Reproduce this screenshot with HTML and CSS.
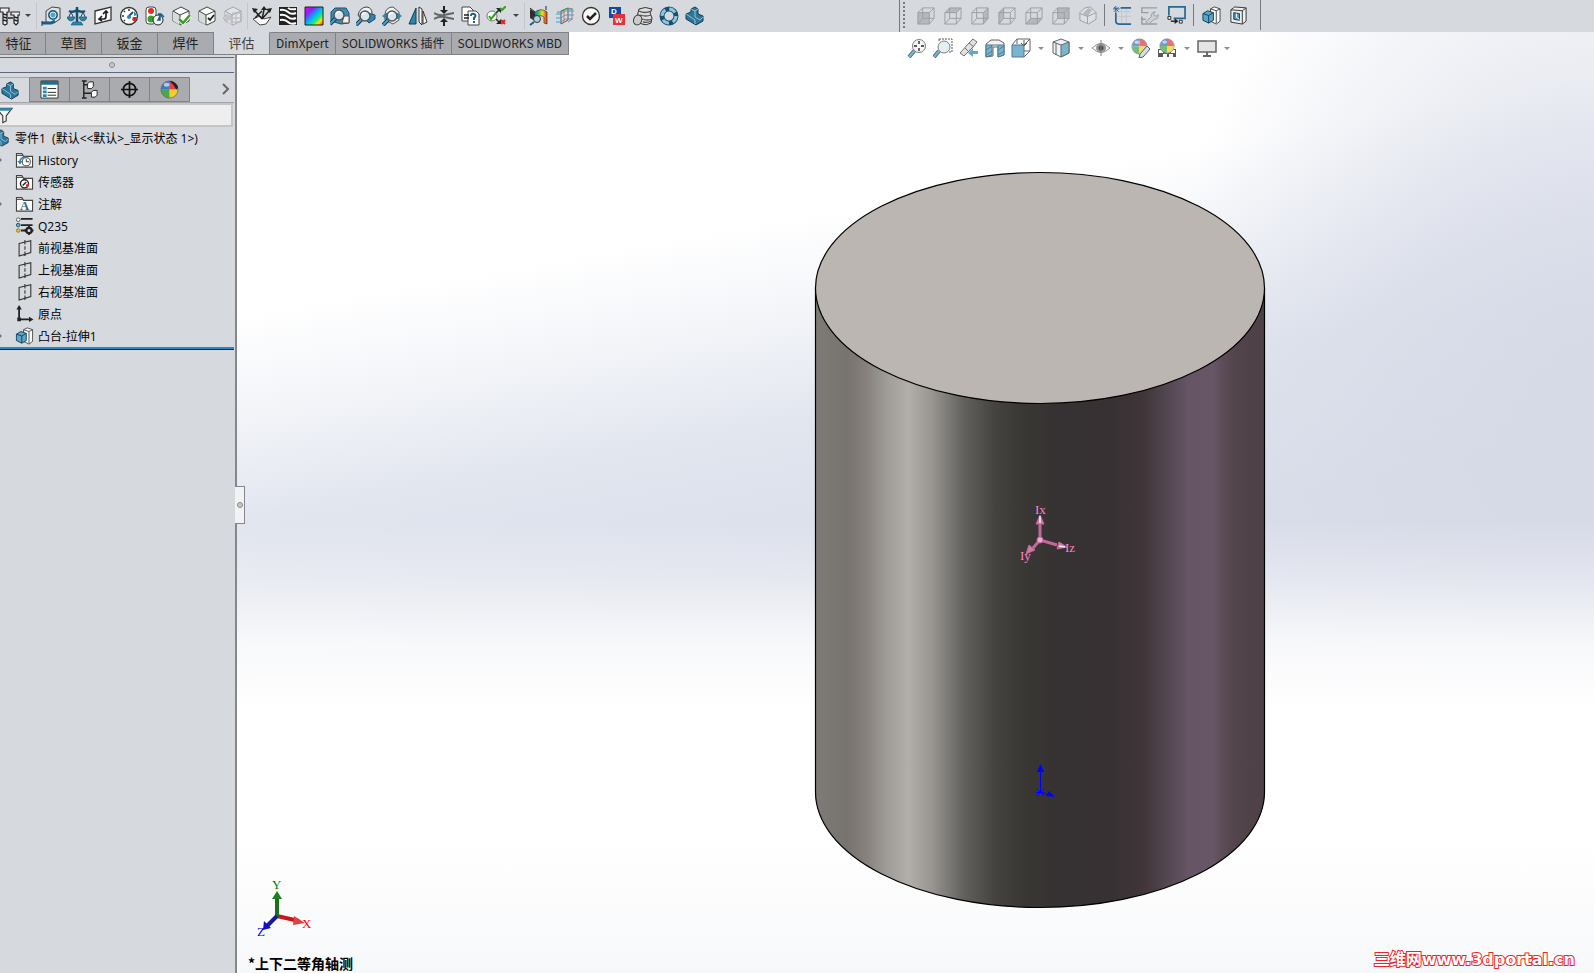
FILE: index.html
```html
<!DOCTYPE html>
<html lang="zh-CN">
<head>
  <meta charset="UTF-8">
  <meta name="viewport" content="width=device-width, initial-scale=1.0">
  <title>零件1</title>
  <link rel="stylesheet" href="styles.css">
</head>
<body>

<!-- Shared icon shapes -->
<svg class="defs" width="0" height="0" aria-hidden="true">
  <defs>
    <linearGradient id="side">
      <stop offset="0" stop-color="#7e7b77"/>
      <stop offset=".07" stop-color="#77736f"/>
      <stop offset=".11" stop-color="#867f7b"/>
      <stop offset=".16" stop-color="#9f9d98"/>
      <stop offset=".207" stop-color="#b2aeaa"/>
      <stop offset=".26" stop-color="#989490"/>
      <stop offset=".33" stop-color="#62615e"/>
      <stop offset=".4" stop-color="#444340"/>
      <stop offset=".46" stop-color="#393834"/>
      <stop offset=".54" stop-color="#363132"/>
      <stop offset=".66" stop-color="#383134"/>
      <stop offset=".73" stop-color="#403539"/>
      <stop offset=".78" stop-color="#52464f"/>
      <stop offset=".83" stop-color="#665564"/>
      <stop offset=".885" stop-color="#675666"/>
      <stop offset=".92" stop-color="#564751"/>
      <stop offset=".95" stop-color="#50434a"/>
      <stop offset="1" stop-color="#4d4147"/>
    </linearGradient>
    <linearGradient id="hue" x2="1" y2="1">
      <stop offset="0" stop-color="#ff00e0"/>
      <stop offset=".25" stop-color="#8a20ff"/>
      <stop offset=".5" stop-color="#00b4ff"/>
      <stop offset=".68" stop-color="#20e880"/>
      <stop offset=".82" stop-color="#f4e800"/>
      <stop offset="1" stop-color="#ff3000"/>
    </linearGradient>
    <linearGradient id="heat">
      <stop offset="0" stop-color="#2060e0"/>
      <stop offset=".35" stop-color="#30c060"/>
      <stop offset=".65" stop-color="#f0e020"/>
      <stop offset="1" stop-color="#e83020"/>
    </linearGradient>
    <symbol id="part" viewBox="0 0 20 20">
      <path d="M1 8l5-2V3l4-2 3 2v5l5 2v5l-7 4L1 13z" fill="#2e7597" stroke="#123c55"/>
      <path d="M6 3l4 2v6l5 3 3-3M10 5l3-2M1 8l9 6v4" fill="none" stroke="#8fc3da"/>
    </symbol>
    <symbol id="lens" viewBox="0 0 20 20">
      <path d="M8 12l-6 6" stroke="#123c55" stroke-width="4"/>
      <path d="M8 12l-6 6" stroke="#4d9dc2" stroke-width="2"/>
      <circle cx="11" cy="9" r="5" fill="#d5e6ee" stroke="#555" stroke-width="1.5"/>
      <path d="M8 8q1-3 4-2" fill="none" stroke="#fff" stroke-width="1.5"/>
    </symbol>
    <symbol id="box" viewBox="0 0 20 20">
      <path d="M2 5l8-4 8 4v10l-8 4-8-4z" fill="#fafafa" stroke="#444"/>
      <path d="M2 5l7 4v10l-7-4z" fill="#d9dadc"/>
      <path d="M2 5l7 4v10M9 9l9-4" fill="none" stroke="#444"/>
    </symbol>
    <symbol id="cube" viewBox="0 0 20 20">
      <path d="M2 7h12v12H2zM7 2h12v11H7zM2 7l5-5M14 7l5-5M14 19l5-6M2 19l5-6" fill="none" stroke="#888b90"/>
    </symbol>
    <symbol id="ball" viewBox="0 0 20 20">
      <path d="M10 10V1a9 9 0 0 0-9 9z" fill="#3f79c4"/>
      <path d="M10 10V1a9 9 0 0 1 9 9z" fill="#e34146"/>
      <path d="M10 10H1a9 9 0 0 0 9 9z" fill="#48a84c"/>
      <path d="M10 10h9a9 9 0 0 1-9 9z" fill="#f3cf2d"/>
      <circle cx="10" cy="10" r="9" fill="none" stroke="#666" stroke-width=".8"/>
      <ellipse cx="7" cy="5" rx="3" ry="2" fill="#fff" opacity=".6"/>
    </symbol>
    <symbol id="extrude" viewBox="0 0 20 20">
      <path d="M9 3l4-2 6 2v13l-4 3-6-3z" fill="#fff" stroke="#444"/>
      <path d="M15 5v13M15 5l4-2M9 3l6 2" fill="none" stroke="#444"/>
      <path d="M1 8l5-3 6 2v8l-5 3-6-3z" fill="#5aa7c9" stroke="#123c55"/>
      <path d="M1 8l6 2 5-3M7 10v8" fill="none" stroke="#123c55"/>
    </symbol>
    <symbol id="folder" viewBox="0 0 20 20">
      <path d="M1 18V3h6l2 3h10v12z" fill="#fafafa" stroke="#444" stroke-width="1.3"/>
      <path d="M1 5h7" stroke="#444"/>
    </symbol>
    <symbol id="plane" viewBox="0 0 20 20">
      <path d="M4 5l13-3v13L4 19zM10.500 1v5M10.500 8v4M10.500 14v5" fill="none" stroke="#333" stroke-width="1.2"/>
    </symbol>
  </defs>
</svg>

<header class="topbar">
  <div class="toolbar toolbar-main">
    <button class="tool bolts" aria-label="智能扣件"><svg viewBox="0 0 20 20"><path d="M0 2h9v4H7v12l-2 1-2-1V6H0zM11 6h9v3h-2v8l-2 2-2-2V9h-3z" fill="#eee" stroke="#222" stroke-width="1.200"/><path d="M3 8l4 1M3 11l4 1M3 14l4 1M14 11l4 1M14 14l4 1M8 12h5" stroke="#222" stroke-width="1.300"/></svg></button>
    <button class="caret" aria-label="更多扣件"></button>
    <span class="sep"></span>
    <button class="tool" aria-label="测量"><svg viewBox="0 0 20 20"><path d="M5 5l6-4 8 1v11l-6 4-8-1z" fill="#e0e2e4" stroke="#444"/><circle cx="12" cy="9" r="4" fill="#52a5cc" stroke="#1c5f85" stroke-width="2"/><circle cx="12" cy="9" r="3" fill="none" stroke="#d5eaf3"/><path d="M1 17h9l4-2" fill="none" stroke="#1c5f85" stroke-width="3"/><path d="M1 15v5" stroke="#123c55"/></svg></button>
    <button class="tool" aria-label="质量属性"><svg viewBox="0 0 20 20"><path d="M10 1v16M2 5q4 2 8-1 4 3 8 1" fill="none" stroke="#174f70" stroke-width="2.500"/><path d="M4 6l-3 7M4 6l3 7M16 6l-3 7M16 6l3 7" stroke="#174f70"/><path d="M0 11h8q-1 4-4 4t-4-4zM12 11h8q-1 4-4 4t-4-4zM6 16h8l2 3H4z" fill="#2e86ad" stroke="#174f70" stroke-width=".6"/></svg></button>
    <button class="tool" aria-label="截面属性"><svg viewBox="0 0 20 20"><path d="M2 5l16-4v13L2 18z" fill="#fff" stroke="#333" stroke-width="1.300"/><path d="M6 13h5q2 0 2-3V6M9 10l-3 3 3 2M10 8l3-3 2 2" fill="none" stroke="#222" stroke-width="1.700"/></svg></button>
    <button class="tool" aria-label="传感器"><svg viewBox="0 0 20 20"><circle cx="10" cy="10" r="8.500" fill="#fff" stroke="#333" stroke-width="1.300"/><path d="M10 3v2M5 5l1 1M3 10h2M5 15l1-1" stroke="#333" stroke-width="1.500"/><path d="M15 5l3 4-3 1z" fill="#2e86ad"/><path d="M14 11h4l-2 5-3-2z" fill="#d22"/><path d="M14 6l-4 4" stroke="#174f70" stroke-width="2"/><circle cx="10" cy="11" r="2" fill="#2e86ad"/></svg></button>
    <button class="tool" aria-label="性能评估"><svg viewBox="0 0 20 20"><rect x="1" y="1" width="10" height="17" rx="3" fill="#fff" stroke="#444"/><circle cx="6" cy="5" r="3" fill="#e03020"/><circle cx="6" cy="13" r="3.500" fill="#35a030"/><circle cx="13" cy="14" r="5" fill="#f4f4f4" stroke="#222"/><path d="M13 14l2-4v4zM13 8h3l3 3" fill="#1c5f85" stroke="#1c5f85" stroke-width="1.500"/></svg></button>
    <button class="tool" aria-label="检查"><svg viewBox="0 0 20 20"><use href="#box"/><path d="M8 13l4 4 7-8" fill="none" stroke="#fff" stroke-width="4"/><path d="M8 13l4 4 7-8" fill="none" stroke="#35a020" stroke-width="2.500"/></svg></button>
    <button class="tool" aria-label="输入诊断"><svg viewBox="0 0 20 20"><use href="#box"/><path d="M11 12l2 2 4-5" fill="none" stroke="#222" stroke-width="1.800"/></svg></button>
    <button class="tool off faint" aria-label="几何体分析" disabled><svg viewBox="0 0 20 20"><use href="#box"/><path d="M9 7h9v9H9M13 7v9M9 12h9" fill="none" stroke="#777"/><path d="M8 10v3H4v3l-4-4 4-4v2z" fill="#aaa" stroke="#888"/></svg></button>
    <span class="sep"></span>
    <button class="tool" aria-label="误差分析"><svg viewBox="0 0 20 20"><path d="M1 13l7-3 4 3 7-2-5 7-6 1z" fill="#fff" stroke="#444"/><path d="M10 13L3 5M10 13l2-9M10 13l7-8M3 12l7-7" stroke="#222" stroke-width="1.500"/><path d="M0 2l6 1-4 4zM9 4h6l-3-4zM20 2l-6 1 4 4z" fill="#222"/></svg></button>
    <button class="tool" aria-label="斑马条纹"><svg viewBox="0 0 20 20"><path d="M1 1h18v18H1z" fill="#222"/><path d="M2 4q5-1 8 2t8 1M2 9q5-1 8 2t8 1M2 14q5-1 8 2t8 1M10 2q3 2 8 1" fill="none" stroke="#fff" stroke-width="2"/></svg></button>
    <button class="tool" aria-label="曲率"><svg viewBox="0 0 20 20"><path d="M1 1h18v18H1z" fill="url(#hue)" stroke="#222"/></svg></button>
    <button class="tool" aria-label="拔模分析"><svg viewBox="0 0 20 20"><path d="M1 6l4-4h11l3 5v10l-8 1L1 15z" fill="#3e8fb4" stroke="#174f70"/><path d="M14 10h5v7h-7z" fill="#eee" stroke="#555"/><use href="#lens" x="-2"/></svg></button>
    <button class="tool" aria-label="底切分析"><svg viewBox="0 0 20 20"><path d="M2 9q2-8 9-8 5 1 5 6v6H5z" fill="#f2f2f2" stroke="#444"/><path d="M12 7l7 2v4l-6 4-4-4z" fill="#2e86ad" stroke="#174f70"/><use href="#lens" x="-2" y="1"/></svg></button>
    <button class="tool" aria-label="分型线分析"><svg viewBox="0 0 20 20"><path d="M3 8q1-7 8-7l6 5v8l-6 4-8-4z" fill="#f2f2f2" stroke="#555"/><path d="M0 10l4-3h12l4 3-4 3H4z" fill="#2e86ad"/><use href="#lens" x="-1" y="1"/></svg></button>
    <button class="tool" aria-label="对称检查"><svg viewBox="0 0 20 20"><path d="M8 2L1 18h7z" fill="#2e86ad" stroke="#123c55"/><path d="M11 1l3 2v16l-3-3zM15 5l4 11-4 2z" fill="#fff" stroke="#333"/></svg></button>
    <button class="tool" aria-label="厚度分析"><svg viewBox="0 0 20 20"><path d="M0 7q5 3 10 2t10-2M0 13q5-3 10-2t10 2" fill="none" stroke="#666" stroke-width="2"/><path d="M10 0v5M10 15v5" stroke="#222" stroke-width="2"/><path d="M6 4h8l-4 4zM6 16h8l-4-4z" fill="#222"/></svg></button>
    <button class="tool" aria-label="比较文档"><svg viewBox="0 0 20 20"><path d="M2 1h8l3 3v11H2z" fill="#fff" stroke="#444"/><path d="M8 5h8l3 3v11H8z" fill="#fff" stroke="#444"/><path d="M4 9h5M4 12h5" stroke="#222" stroke-width="1.500"/><path d="M11 10q0-3 3-2 3 1 0 4v2M14 15v2" fill="none" stroke="#1c5f85" stroke-width="2"/></svg></button>
    <button class="tool" aria-label="检查激活的文档"><svg viewBox="0 0 20 20"><path d="M9 8l4-4M9 12l4 4" stroke="#222" stroke-width="1.500"/><path d="M10 2h5v5zM10 18h5v-5z" fill="#222"/><circle cx="6" cy="10" r="5" fill="#fff" stroke="#777"/><path d="M3 10l2 3 5-6M14 2l2 2 4-4" fill="none" stroke="#35a020" stroke-width="2"/><path d="M15 14l4 4M19 14l-4 4" stroke="#d22" stroke-width="2"/></svg></button>
    <button class="caret" aria-label="更多检查"></button>
    <span class="sep"></span>
    <button class="tool" aria-label="SimulationXpress"><svg viewBox="0 0 20 20"><path d="M1 3l5 3v9l-5-3z" fill="#333"/><path d="M5 7q6-6 13-1v12l-3-1V11q-4-3-7 1z" fill="url(#heat)" stroke="#333" stroke-width=".7"/><path d="M1 2l5 4M1 6l5 4M17 0v4" stroke="#222"/><circle cx="8" cy="13" r="3.500" fill="#a8d0e2" stroke="#333"/><path d="M5 16l-4 3" stroke="#1c5f85" stroke-width="2"/></svg></button>
    <button class="tool" aria-label="FloXpress"><svg viewBox="0 0 20 20"><path d="M6 5l7-3v12l-7 4z" fill="#eed8d6" stroke="#555"/><path d="M13 2l4 1v10l-4 3M9 4v12" fill="none" stroke="#d66"/><path d="M1 8h5l4-3h9M1 12h5l4-3h9M1 16h5l4-3h8" fill="none" stroke="#38a0d8"/><path d="M2 6h4l5-3h7" fill="none" stroke="#3a7"/></svg></button>
    <button class="tool" aria-label="DFMXpress"><svg viewBox="0 0 20 20"><circle cx="10" cy="10" r="8.500" fill="#f7f7f7" stroke="#333" stroke-width="1.300"/><path d="M6 10l3 3 6-6" fill="none" stroke="#222" stroke-width="2.500"/></svg></button>
    <button class="tool" aria-label="DriveWorksXpress"><svg viewBox="0 0 20 20"><path d="M2 1h12v11H2z" fill="#0b4da2"/><path d="M6 8h12v11H6z" fill="#e8303a"/><text x="4" y="8" class="tiny">D</text><text x="8" y="17" class="tiny">W</text></svg></button>
    <button class="tool" aria-label="Costing"><svg viewBox="0 0 20 20"><path d="M6 3q6-3 13 0l-2 4 2 5-1 5q-5 3-9 1l-6-3z" fill="#ddd" stroke="#333"/><path d="M6 5q6 3 12 0M7 9q6 2 11 0M9 13q6 2 10 0M10 16q5 1 8-1" fill="none" stroke="#555" stroke-width="1.300"/><ellipse cx="5" cy="14" rx="4" ry="5" fill="#ccc" stroke="#333" transform="rotate(20 5 13)"/></svg></button>
    <button class="tool" aria-label="Sustainability"><svg viewBox="0 0 20 20"><circle cx="10" cy="10" r="7" fill="none" stroke="#174f70" stroke-width="5"/><circle cx="10" cy="10" r="7" fill="none" stroke="#8fc6de" stroke-width="3" stroke-dasharray="7 4"/></svg></button>
    <button class="tool" aria-label="零件"><svg viewBox="0 0 20 20"><use href="#part"/></svg></button>
  </div>

  <div class="toolbar toolbar-views">
    <span class="grip"></span>
    <button class="tool wide off" aria-label="前视" disabled><svg viewBox="0 0 20 20"><path d="M2 7h12v12H2z" fill="#aaadb1"/><use href="#cube"/></svg></button>
    <button class="tool wide off" aria-label="后视" disabled><svg viewBox="0 0 20 20"><path d="M2 7l5-5h12l-5 5z" fill="#aaadb1"/><use href="#cube"/></svg></button>
    <button class="tool wide off" aria-label="左视" disabled><svg viewBox="0 0 20 20"><path d="M14 7l5-5v11l-5 6z" fill="#aaadb1"/><use href="#cube"/></svg></button>
    <button class="tool wide off" aria-label="右视" disabled><svg viewBox="0 0 20 20"><path d="M2 7l5-5v11l-5 6z" fill="#aaadb1"/><use href="#cube"/></svg></button>
    <button class="tool wide off" aria-label="上视" disabled><svg viewBox="0 0 20 20"><path d="M2 19l5-6h12l-5 6z" fill="#aaadb1"/><use href="#cube"/></svg></button>
    <button class="tool wide off" aria-label="下视" disabled><svg viewBox="0 0 20 20"><path d="M7 2h12v11H7z" fill="#aaadb1"/><use href="#cube"/></svg></button>
    <button class="tool wide off" aria-label="正视于" disabled><svg viewBox="0 0 20 20"><path d="M2 7l5-5 6-1 6 6v7l-8 5-9-4z" fill="#e2e3e5" stroke="#888b90"/><path d="M5 8l6-6 4 2-5 7z" fill="#aaadb1"/><path d="M2 8l8 3v8M10 11l9-4" fill="none" stroke="#888b90"/></svg></button>
    <span class="sep dark"></span>
    <button class="tool wide" aria-label="草图"><svg viewBox="0 0 20 20"><path d="M5 6h14M5 11h14M9 1v18M14 1v18" stroke="#c3c6cc"/><path d="M8 2h11M3 7v9q0 3 4 3h12" fill="none" stroke="#236b92" stroke-width="1.800"/><path d="M3 0v7M0 3h7M1 1l5 5M6 1L1 6" stroke="#236b92"/></svg></button>
    <button class="tool wide off" aria-label="编辑草图" disabled><svg viewBox="0 0 20 20"><path d="M1 2h17M2 2v5h7M2 11v8h16M1 14h5" fill="none" stroke="#888" stroke-width="1.500"/><path d="M6 17l6-6q-1-4 4-5l-2 3 3 2 2-2q1 5-4 5l-6 5z" fill="#ccc" stroke="#888"/></svg></button>
    <button class="tool wide" aria-label="移动视图"><svg viewBox="0 0 20 20"><path d="M2 10V1h17v12H7" fill="none" stroke="#236b92" stroke-width="1.800"/><path d="M1 11h3v3H1zM13 15h3v3h-3z" fill="#fff" stroke="#222"/><path d="M4 16h5" stroke="#222" stroke-width="1.500"/><path d="M8 13l4 3-4 3z" fill="#222"/></svg></button>
    <span class="sep dark"></span>
    <button class="tool wide" aria-label="拉伸凸台"><svg viewBox="0 0 20 20"><use href="#extrude"/></svg></button>
    <button class="tool wide" aria-label="拉伸切除"><svg viewBox="0 0 20 20"><path d="M2 4l4-3 12 1v14l-4 3-12-2z" fill="#eee" stroke="#333"/><path d="M2 4l12 1v14M14 5l4-3" fill="none" stroke="#333"/><path d="M5 7l6 1v7l-6-1z" fill="#4d9dc2" stroke="#123c55"/><path d="M8 8v4l3 2" fill="none" stroke="#fff"/></svg></button>
  </div>
</header>

<main class="workspace">
  <div class="tab-row">
    <nav class="tabs">
      <button class="tab tab-first">特征</button>
      <button class="tab">草图</button>
      <button class="tab">钣金</button>
      <button class="tab">焊件</button>
      <button class="tab active">评估</button>
      <button class="tab latin">DimXpert</button>
      <button class="tab latin">SOLIDWORKS 插件</button>
      <button class="tab latin">SOLIDWORKS MBD</button>
    </nav>

    <div class="hud">
      <button class="tool" aria-label="整屏显示全图"><svg viewBox="0 0 20 20"><path d="M8 12l-6 7" stroke="#123c55" stroke-width="4"/><path d="M8 12l-6 7" stroke="#4d9dc2" stroke-width="2"/><circle cx="12" cy="8" r="6.500" fill="#f4f4f4" stroke="#555"/><path d="M12 3v3M12 10v3M7 8h3M14 8h3" stroke="#222" stroke-width="1.800"/></svg></button>
      <button class="tool" aria-label="局部放大"><svg viewBox="0 0 20 20"><path d="M6 1h13v13h-3M6 1v3" fill="none" stroke="#222" stroke-dasharray="2 1"/><path d="M6 13l-5 6" stroke="#123c55" stroke-width="4"/><path d="M6 13l-5 6" stroke="#4d9dc2" stroke-width="2"/><circle cx="11" cy="9" r="6" fill="#dde9ee" stroke="#555"/></svg></button>
      <button class="tool" aria-label="上一视图"><svg viewBox="0 0 20 20"><path d="M1 15l9-10 4-4 4 3-4 5-9 9z" fill="#d8d8d8" stroke="#444"/><path d="M10 5l5 4M6 10l4 4" stroke="#444"/><path d="M19 13v3h-5v3l-5-4 5-5v3z" fill="#3689b1"/></svg></button>
      <button class="tool" aria-label="剖面视图"><svg viewBox="0 0 20 20"><path d="M1 6l5-4h8l5 3v12l-6 2V9H8v9l-7 1z" fill="#eee" stroke="#333"/><path d="M1 7h6v10l-6 2zM13 7h6v10l-6 2z" fill="#4d9dc2" stroke="#174f70"/><path d="M1 12l6-4M1 17l6-4M13 12l6-4M13 17l6-4M7 7h6" stroke="#174f70"/></svg></button>
      <button class="tool" aria-label="视图定向"><svg viewBox="0 0 20 20"><path d="M1 7l5-6h13v12l-6 6M6 1v5M13 7l6-6M13 13h6" fill="none" stroke="#333"/><path d="M1 7h12v12H1z" fill="#4d9dc2" stroke="#174f70"/><path d="M13 2v6M10 5l3 3 3-3" fill="none" stroke="#222"/></svg></button>
      <button class="caret" aria-label="视图定向选项"></button>
      <button class="tool" aria-label="显示样式"><svg viewBox="0 0 20 20"><path d="M2 4l8-3 8 3v11l-8 4-8-4z" fill="#e5eff4" stroke="#333"/><path d="M10 7l8-3v11l-8 4z" fill="#4d9dc2" stroke="#333"/><path d="M2 4l8 3M5 5v12" stroke="#333"/></svg></button>
      <button class="caret" aria-label="显示样式选项"></button>
      <button class="tool" aria-label="隐藏显示项目"><svg viewBox="0 0 20 20"><path d="M1 10q9-9 18 0-9 9-18 0z" fill="#eee" stroke="#777"/><circle cx="10" cy="10" r="5" fill="#777"/><circle cx="10" cy="10" r="2.500" fill="#111"/><path d="M10 2v16" stroke="#555"/></svg></button>
      <button class="caret" aria-label="隐藏显示选项"></button>
      <button class="tool" aria-label="编辑外观"><svg viewBox="0 0 20 20"><use href="#ball" width="17" height="17"/><path d="M9 16l7-8 3 3-7 8-4 1z" fill="#b8dbe9" stroke="#222"/></svg></button>
      <button class="tool" aria-label="应用布景"><svg viewBox="0 0 20 20"><path d="M1 11h18v8H1z" fill="#222"/><path d="M2 12h4v3H2zM14 12h4v3h-4zM6 16h4v3H6zM12 16h4v3h-4z" fill="#fff"/><use href="#ball" x="2" width="16" height="16"/></svg></button>
      <button class="caret" aria-label="布景选项"></button>
      <button class="tool" aria-label="视图设定"><svg viewBox="0 0 20 20"><path d="M1 3h18v11H1z" fill="#ddd" stroke="#333" stroke-width="1.500"/><path d="M10 14v4M6 18h8" stroke="#333" stroke-width="2"/></svg></button>
      <button class="caret" aria-label="视图设定选项"></button>
    </div>
  </div>

  <aside class="panel">
    <div class="panel-handle"><span class="dot"></span></div>
    <div class="panel-tabs">
      <button class="ptab active" aria-label="设计树"><svg viewBox="0 0 20 20"><use href="#part"/></svg></button>
      <button class="ptab" aria-label="属性"><svg viewBox="0 0 20 20"><path d="M1 1h18v18H1z" fill="#fff" stroke="#333"/><path d="M1 1h18v4H1z" fill="#1f6d95"/><path d="M3 7h4v3H3zM3 11h4v3H3zM3 15h4v3H3z" fill="#2e86ad"/><path d="M8 9h9M8 13h9M8 16h9" stroke="#222"/></svg></button>
      <button class="ptab" aria-label="配置"><svg viewBox="0 0 20 20"><path d="M4 1v18M4 5h4M4 14h8M2 1h5M2 19h5" fill="none" stroke="#222" stroke-width="1.500"/><path d="M8 4l2-2h4v5l-2 2H8zM12 13l2-2h4v5l-2 2h-4z" fill="#fff" stroke="#222"/></svg></button>
      <button class="ptab" aria-label="尺寸"><svg viewBox="0 0 20 20"><circle cx="10" cy="10" r="6.500" fill="none" stroke="#111" stroke-width="1.800"/><path d="M10 1v18M1 10h18" stroke="#111" stroke-width="1.800"/></svg></button>
      <button class="ptab" aria-label="外观"><svg viewBox="0 0 20 20"><use href="#ball"/><path d="M10 1q4 3 7 9 2-1 2-3-3-6-9-6z" fill="#222"/></svg></button>
      <button class="more" aria-label="展开"><svg viewBox="0 0 10 12"><path d="M2 1l5 5-5 5" fill="none" stroke="#666" stroke-width="2"/></svg></button>
    </div>
    <div class="filter">
      <svg viewBox="0 0 20 20"><path d="M0 2h19l-7 9v6l-4 2v-8z" fill="#f7f7f7" stroke="#333" stroke-width="1.300"/><path d="M1 2h18l-2 3H3z" fill="#2e86ad"/></svg>
      <input type="text" aria-label="过滤器">
    </div>
    <ul class="tree">
      <li class="root"><svg viewBox="0 0 20 20"><use href="#part"/></svg><span>零件1&nbsp; (默认&lt;&lt;默认&gt;_显示状态 1&gt;)</span></li>
      <li class="has-children"><svg viewBox="0 0 20 20"><use href="#folder"/><circle cx="12" cy="12" r="4.500" fill="#fff" stroke="#333"/><path d="M12 9v3h3" fill="none" stroke="#222"/><path d="M12 7q-7-1-7 6" fill="none" stroke="#2e86ad" stroke-width="1.800"/><path d="M2 11h6l-3 4z" fill="#2e86ad"/></svg><span>History</span></li>
      <li><svg viewBox="0 0 20 20"><use href="#folder"/><circle cx="10" cy="12" r="4.500" fill="#fff" stroke="#222" stroke-width="1.500"/><path d="M8 14l4-4" stroke="#222" stroke-width="1.500"/><path d="M12 13l3 0-2 3z" fill="#d22" stroke="#d22"/></svg><span>传感器</span></li>
      <li class="has-children"><svg viewBox="0 0 20 20"><use href="#folder"/><text x="5" y="17" class="letter">A</text></svg><span>注解</span></li>
      <li><svg viewBox="0 0 20 20"><path d="M6 2h13M6 9h13M6 15h8" stroke="#222" stroke-width="2"/><circle cx="3" cy="3" r="2" fill="#fff" stroke="#555"/><circle cx="3" cy="9" r="2" fill="#5bb7e0" stroke="#246"/><circle cx="3" cy="15" r="2" fill="#f2c010" stroke="#874"/><circle cx="15" cy="15" r="3" fill="#d6d9de" stroke="#222" stroke-width="2.500"/><path d="M15 10v3M15 17v3M10 15h3M17 15h3" stroke="#222" stroke-width="2"/></svg><span>Q235</span></li>
      <li><svg viewBox="0 0 20 20"><use href="#plane"/></svg><span>前视基准面</span></li>
      <li><svg viewBox="0 0 20 20"><use href="#plane"/></svg><span>上视基准面</span></li>
      <li><svg viewBox="0 0 20 20"><use href="#plane"/></svg><span>右视基准面</span></li>
      <li><svg viewBox="0 0 20 20"><path d="M4 3v13h13" fill="none" stroke="#222" stroke-width="2"/><path d="M1 5l3-5 3 5zM15 13l5 3-5 3zM2 14h4v4H2z" fill="#222"/></svg><span>原点</span></li>
      <li class="has-children"><svg viewBox="0 0 20 20"><use href="#extrude"/></svg><span>凸台-拉伸1</span></li>
    </ul>
    <div class="rollback"></div>
    <button class="splitter" aria-label="折叠面板"><span class="dot"></span></button>
  </aside>

  <section class="viewport">
    <svg class="scene" viewBox="237 32 1357 941">
      <!-- Cylinder -->
      <path d="M815.500 288v504a224.500 115.500 0 0 0 449 0V288z" fill="url(#side)" stroke="#000" stroke-width="1.200"/>
      <ellipse cx="1040" cy="288" rx="224.500" ry="115.500" fill="#bcb6b2" stroke="#000" stroke-width="1.200"/>

      <!-- Principal axes of inertia -->
      <g stroke="#c06a98" stroke-width="3" fill="#d078a4">
        <path d="M1040 540v-18M1040 540l17 5M1040 540l-7 8"/>
        <path d="M1040 515l4 9h-8zM1067 547l-10 2 2-7zM1026 554l3-9 6 5z" stroke-width="1"/>
        <path d="M1040 516v7M1059 546l6 1" stroke="#ffe4f2" stroke-width="1.500"/>
        <circle cx="1040" cy="540" r="3" stroke-width="1" fill="#f0a8cc"/>
      </g>
      <g class="axis pink">
        <text x="1035" y="514">Ix</text>
        <text x="1065" y="552">Iz</text>
        <text x="1020" y="560">Iy</text>
      </g>

      <!-- Origin -->
      <path d="M1040.500 792v-20M1040 792l10 3M1037 789l7 7M1044 789l-7 7M1036 792.500h8" stroke="#00f" fill="none"/>
      <path d="M1037 772l3.500-8 3.500 8zM1046 796l3-5 6 6z" fill="#00f"/>

      <!-- Orientation triad -->
      <g stroke-width="4">
        <path d="M277 916l22 5" stroke="#c41818"/>
        <path d="M277 917v-20" stroke="#1c701c"/>
        <path d="M277 916l-10 10" stroke="#1818a0"/>
      </g>
      <path d="M294 916l11 7-12 2z" fill="#e04040"/>
      <path d="M272 899l5-8 5 8z" fill="#1c801c"/>
      <path d="M263 930l1-9 7 7z" fill="#1010c0"/>
      <g class="axis">
        <text x="272" y="889" fill="#008000">Y</text>
        <text x="302" y="928" fill="#f00">X</text>
        <text x="257" y="936" fill="#00f">Z</text>
      </g>
      <text x="248" y="969" class="view-name">*上下二等角轴测</text>
    </svg>
    <div class="watermark">三维网www.3dportal.cn</div>
  </section>
</main>

</body>
</html>
```
FILE: styles.css
```css
*, *::before {
  box-sizing: border-box;
}
body {
  margin: 0;
  height: 100vh;
  display: flex;
  flex-direction: column;
  overflow: hidden;
  background: #d6d9de;
  font-family: "Noto Sans CJK SC", sans-serif;
  font-size: 12px;
  color: #000;
}
button {
  border: none;
  padding: 0;
  background: none;
  font: inherit;
  color: inherit;
}
.defs {
  position: absolute;
}

/* Top toolbars */
.topbar {
  display: flex;
  height: 32px;
  background: #d6d9de;
}
.toolbar {
  display: flex;
  align-items: center;
}
.toolbar-main {
  width: 900px;
  height: 33px;
  padding-bottom: 1px;
  border-right: 1px solid #77797d;
  border-bottom: 1px solid #77797d;
}
.toolbar-views {
  width: 361px;
  height: 30px;
  border-right: 1px solid #77797d;
}
.tool {
  display: flex;
  align-items: center;
  justify-content: center;
  flex: none;
  width: 26px;
  height: 24px;
}
.tool.wide {
  width: 27px;
}
.tool svg {
  width: 20px;
  height: 20px;
}
.toolbar-views svg {
  width: 19px;
  height: 19px;
}
.tool.bolts {
  width: 20px;
}
.tool.off {
  opacity: 0.75;
}
.tool.faint {
  opacity: 0.35;
}
.caret {
  flex: none;
  width: 14px;
  height: 24px;
}
.caret::before {
  content: "";
  display: block;
  margin: 0 auto;
  width: 6px;
  border: 3px solid transparent;
  border-top-color: #444;
  border-bottom: none;
}
.sep {
  flex: none;
  width: 1px;
  height: 26px;
  margin: 0 1px;
  background: #c2c5ca;
}
.toolbar-main .bolts + .caret {
  width: 15px;
}
.sep.dark {
  height: 22px;
  margin: 0 4px 0 3px;
  background: #77797d;
}
.grip {
  height: 26px;
  margin: 0 7px 0 3px;
  border-left: 2px dotted #77797d;
}

/* Command tabs and view toolbar */
.workspace {
  flex: 1;
  min-height: 0;
  display: grid;
  grid-template-columns: 237px 1fr;
  grid-template-rows: 23px 1fr;
}
.tab-row {
  grid-column: 1 / 3;
  grid-row: 1;
  z-index: 2;
  display: flex;
  justify-content: space-between;
  align-items: flex-start;
}
.tabs {
  display: flex;
  height: 23px;
}
.tab {
  min-width: 56px;
  padding: 0 8px 2px;
  border: 1px solid #808286;
  border-left: none;
  background: #aaabae;
  color: #222;
  font-size: 13px;
  line-height: 18px;
  white-space: nowrap;
}
.tab.latin {
  padding: 0 6px 2px;
  font-size: 12px;
}
.tab-first {
  min-width: 46px;
  padding: 0 13px 2px 5px;
}
.tab.active {
  border-top-color: #d6d9de;
  background: #d6d9de;
  color: #444;
}
.hud {
  display: flex;
  align-items: center;
  height: 32px;
  padding-right: 360px;
}
.hud svg {
  opacity: 0.75;
}
.hud .caret {
  opacity: 0.6;
}

/* Feature tree panel */
.panel {
  grid-column: 1;
  grid-row: 2;
  position: relative;
  padding-top: 2px;
  border-right: 2px solid #85878b;
  background: #d6d9de;
}
.panel-handle {
  display: flex;
  align-items: center;
  justify-content: center;
  height: 16px;
  margin-right: 1px;
  padding-right: 10px;
  border-top: 1px solid #5f6780;
  border-bottom: 1px solid #5f6780;
}
.dot {
  width: 6px;
  height: 6px;
  border: 1px solid #888;
  border-radius: 50%;
  background: #c8cacd;
}
.panel-tabs {
  display: flex;
  height: 26px;
  margin: 4px 1px 0 0;
  border-bottom: 1px solid #a2a4a8;
}
.ptab {
  width: 40px;
  border: 1px solid #808286;
  border-left: none;
  background: #aaabae;
}
.ptab.active {
  width: 30px;
  padding-right: 8px;
  border-top-color: #aaabae;
  border-bottom: none;
  background: #d6d9de;
}
.ptab svg {
  display: block;
  width: 19px;
  height: 19px;
  margin: 0 auto;
}
.more {
  margin-left: auto;
  width: 16px;
}
.more svg {
  width: 10px;
  height: 12px;
}
.filter {
  display: flex;
  align-items: center;
  height: 24px;
  margin-right: 2px;
  border: 2px solid #c3c5c8;
  border-left: none;
  background: #eee;
}
.filter svg {
  width: 17px;
  height: 18px;
  margin-left: -4px;
}
.filter input {
  flex: 1;
  min-width: 0;
  height: 18px;
  border: none;
  background: transparent;
  outline: none;
}
.tree {
  margin: 0;
  padding: 0;
  list-style: none;
  overflow: hidden;
  font-family: "Open Sans", "Noto Sans CJK SC", sans-serif;
}
.tree li {
  display: flex;
  align-items: center;
  gap: 4px;
  height: 22px;
  padding-left: 15px;
  white-space: nowrap;
}
.tree svg {
  flex: none;
  width: 19px;
  height: 18px;
}
.tree .root {
  padding-left: 0;
}
.tree .root svg {
  width: 18px;
  margin-left: -8px;
}
.tree .root span {
  margin-left: 1px;
}
.tree .has-children {
  padding-left: 0;
}
.tree .has-children::before {
  content: "";
  width: 12px;
  border: 3px solid transparent;
  border-left-color: #777;
  border-right: none;
  margin-left: -1px;
}
.rollback {
  height: 3px;
  margin-right: 1px;
  background: #2f86c0;
  border-bottom: 1px solid #1a1a90;
}
.splitter {
  position: absolute;
  z-index: 2;
  top: 47%;
  right: -10px;
  display: flex;
  align-items: center;
  justify-content: center;
  width: 10px;
  height: 38px;
  border: 1px solid #85878b;
  border-left: none;
  background: #f2f3f5;
}

/* Graphics area */
.viewport {
  grid-column: 2;
  grid-row: 1 / 3;
  position: relative;
  min-height: 0;
  background:
    linear-gradient(to bottom, rgba(255, 255, 255, 0) 52%, rgba(255, 255, 255, 0.3) 58%, rgba(255, 255, 255, 0.8) 65%, #fff 72%, #fff 86%, #f7f8fa 100%),
    radial-gradient(32% 60% at 100% 38%, rgba(213, 217, 230, 0.9), rgba(213, 217, 230, 0.6) 45%, rgba(213, 217, 230, 0)),
    linear-gradient(170deg, #fff 24%, #f3f5f9 32%, #e1e5ee 42%, #dadeea 55%, #dadeea 100%);
}
.scene {
  display: block;
  width: 100%;
  height: 100%;
}
.axis {
  font-family: "Liberation Serif", serif;
  font-size: 13px;
}
.pink {
  fill: #ff80c8;
}
.view-name {
  font-size: 14px;
  font-weight: bold;
}
.tiny {
  font-family: "Liberation Sans", sans-serif;
  font-size: 8px;
  font-weight: bold;
  fill: #fff;
}
.letter {
  font-family: "Liberation Serif", serif;
  font-size: 14px;
  font-weight: bold;
  fill: #1f6d95;
}
.watermark {
  position: absolute;
  right: 19px;
  bottom: 2px;
  font: bold 16px/22px "DejaVu Sans", "Noto Sans CJK SC", sans-serif;
  color: #fff;
  -webkit-text-stroke: 2px #e8252a;
  paint-order: stroke fill;
}
```
